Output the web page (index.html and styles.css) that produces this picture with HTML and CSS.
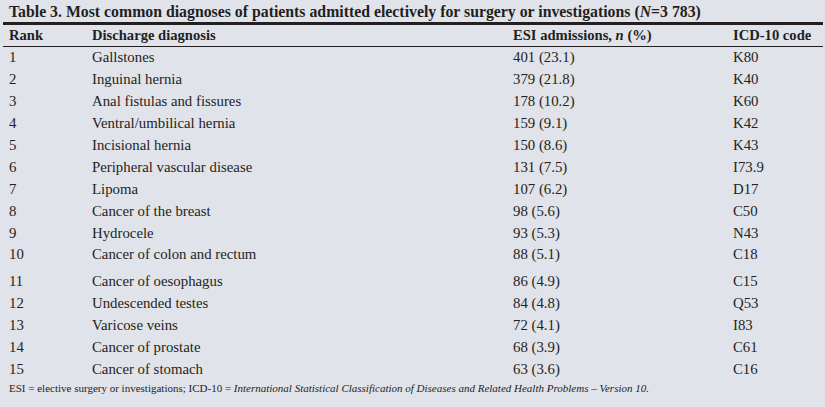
FILE: index.html
```html
<!DOCTYPE html>
<html>
<head>
<meta charset="utf-8">
<link rel="stylesheet" href="styles.css">
</head>
<body>
<div class="page">
  <h1 class="title">Table 3. Most common diagnoses of patients admitted electively for surgery or investigations (<i>N</i>=3 783)</h1>
  <table class="tbl">
    <colgroup>
      <col class="c1"><col class="c2"><col class="c3"><col class="c4">
    </colgroup>
    <thead>
      <tr><th>Rank</th><th>Discharge diagnosis</th><th>ESI admissions, <i>n</i> (%)</th><th>ICD-10 code</th></tr>
    </thead>
    <tbody>
      <tr><td>1</td><td>Gallstones</td><td>401 (23.1)</td><td>K80</td></tr>
      <tr><td>2</td><td>Inguinal hernia</td><td>379 (21.8)</td><td>K40</td></tr>
      <tr><td>3</td><td>Anal fistulas and fissures</td><td>178 (10.2)</td><td>K60</td></tr>
      <tr><td>4</td><td>Ventral/umbilical hernia</td><td>159 (9.1)</td><td>K42</td></tr>
      <tr><td>5</td><td>Incisional hernia</td><td>150 (8.6)</td><td>K43</td></tr>
      <tr><td>6</td><td>Peripheral vascular disease</td><td>131 (7.5)</td><td>I73.9</td></tr>
      <tr><td>7</td><td>Lipoma</td><td>107 (6.2)</td><td>D17</td></tr>
      <tr><td>8</td><td>Cancer of the breast</td><td>98 (5.6)</td><td>C50</td></tr>
      <tr><td>9</td><td>Hydrocele</td><td>93 (5.3)</td><td>N43</td></tr>
      <tr><td>10</td><td>Cancer of colon and rectum</td><td>88 (5.1)</td><td>C18</td></tr>
      <tr class="gap"><td>11</td><td>Cancer of oesophagus</td><td>86 (4.9)</td><td>C15</td></tr>
      <tr><td>12</td><td>Undescended testes</td><td>84 (4.8)</td><td>Q53</td></tr>
      <tr><td>13</td><td>Varicose veins</td><td>72 (4.1)</td><td>I83</td></tr>
      <tr><td>14</td><td>Cancer of prostate</td><td>68 (3.9)</td><td>C61</td></tr>
      <tr><td>15</td><td>Cancer of stomach</td><td>63 (3.6)</td><td>C16</td></tr>
    </tbody>
  </table>
  <p class="note">ESI = elective surgery or investigations; ICD-10 = <i>International Statistical Classification of Diseases and Related Health Problems – Version 10.</i></p>
</div>
</body>
</html>
```
FILE: styles.css
```css
html, body {
  margin: 0;
  padding: 0;
  background: #e1e3ea;
}
body {
  font-family: "Liberation Serif", "Times New Roman", serif;
  color: #231f20;
  width: 825px;
  height: 407px;
  overflow: hidden;
}
.page {
  padding: 0 2px 0 3px;
}
.title {
  margin: 0;
  height: 22px;
  line-height: 24px;
  font-size: 15.8px;
  font-weight: bold;
  padding-left: 6px;
  border-bottom: 3px solid #231f20;
  white-space: nowrap;
}
.tbl {
  width: 820px;
  border-collapse: collapse;
  table-layout: fixed;
  font-size: 14.8px;
}
.c1 { width: 83px; }
.c2 { width: 421px; }
.c3 { width: 220px; }
.c4 { width: 96px; }
.tbl th {
  text-align: left;
  font-weight: bold;
  font-size: 14.6px;
  height: 21px;
  padding: 0 0 0 6px;
  border-bottom: 1px solid #231f20;
  line-height: 21px;
}
.tbl td {
  height: 21.9px;
  padding: 0 0 0 6px;
  line-height: 21px;
  white-space: nowrap;
}
.tbl tr.gap td {
  padding-top: 5px;
}
.note {
  margin: 0;
  padding: 2px 0 0 6px;
  font-size: 11px;
  white-space: nowrap;
}
```
